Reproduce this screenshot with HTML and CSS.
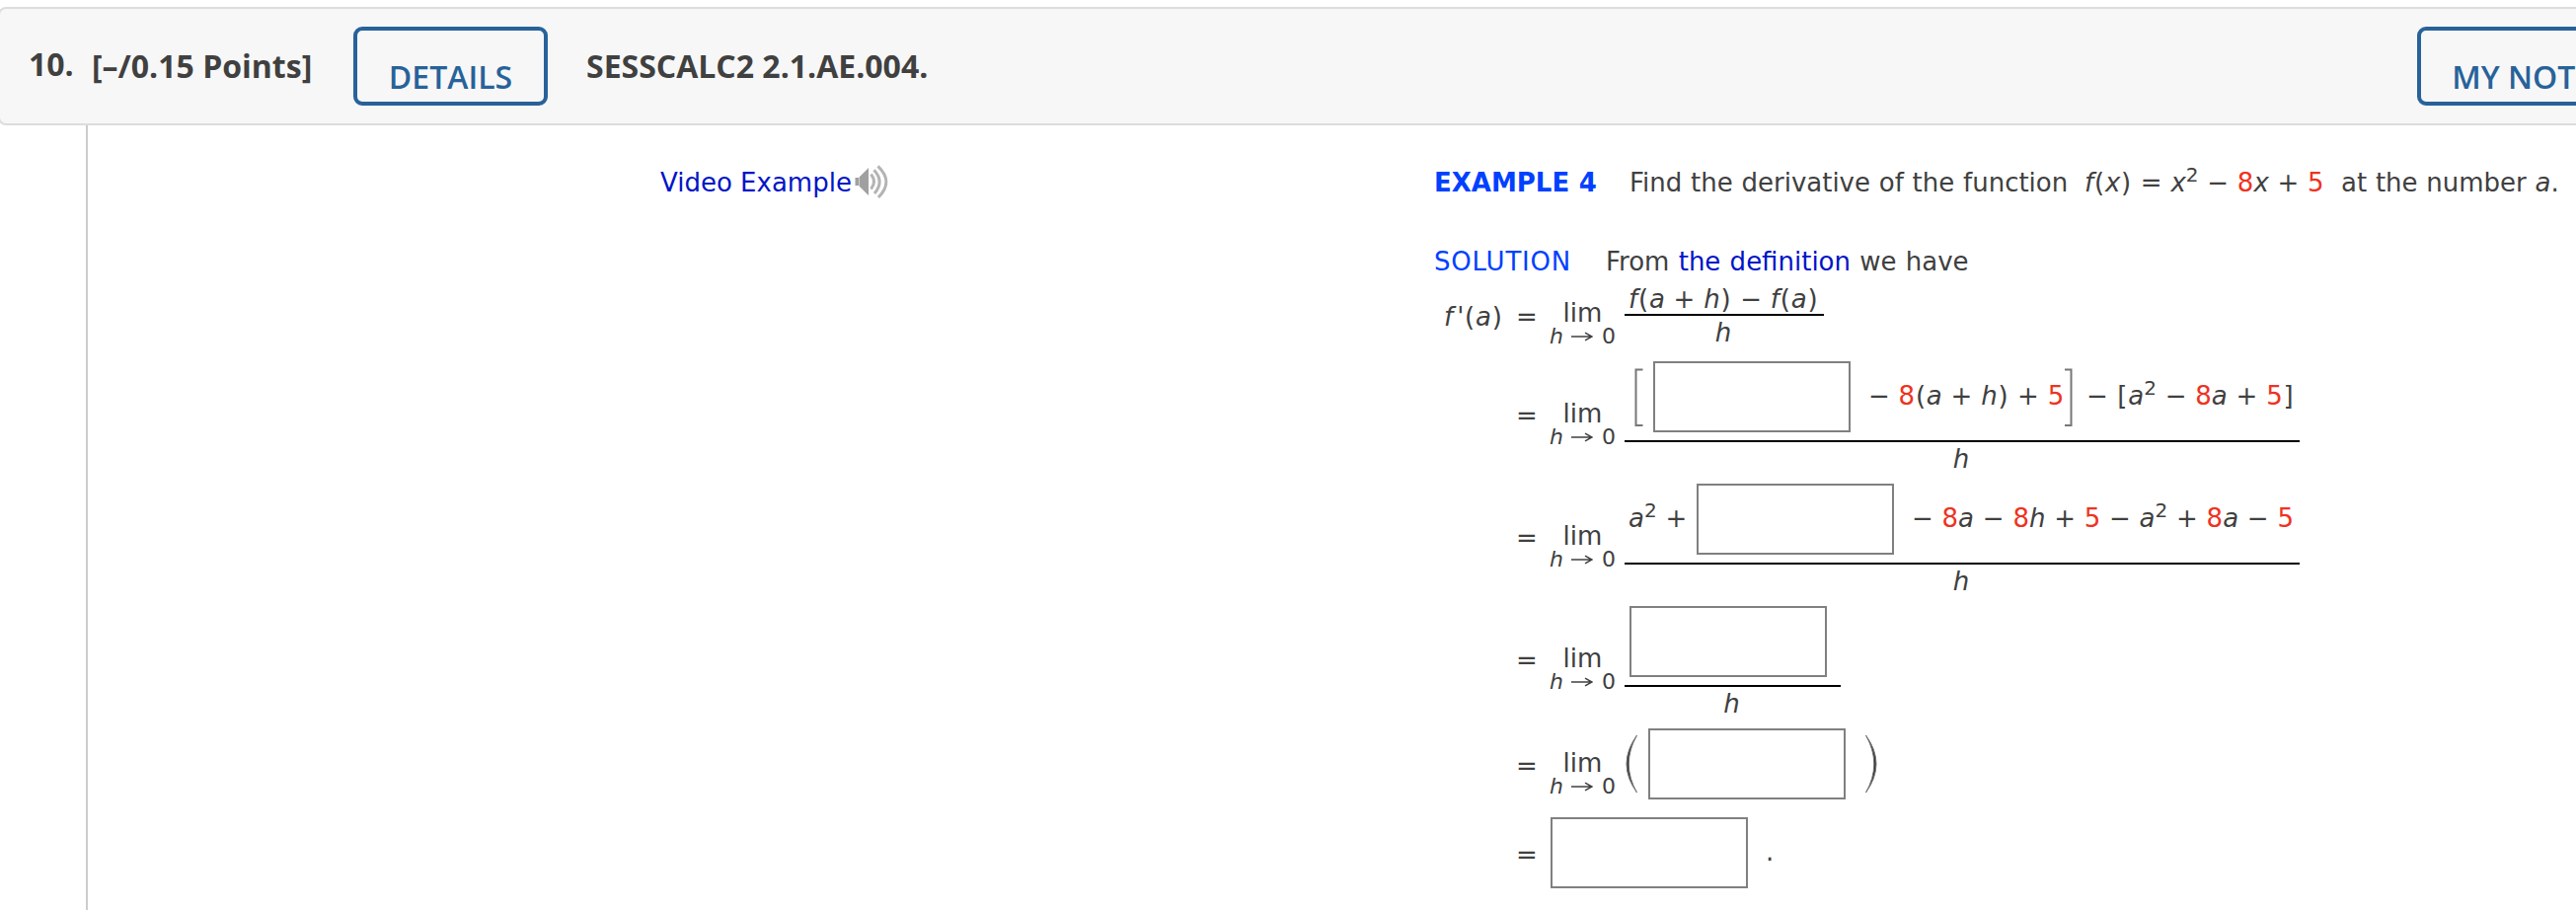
FILE: index.html
```html
<!DOCTYPE html>
<html lang="en">
<head>
<meta charset="utf-8">
<title>SESSCALC2 2.1.AE.004</title>
<link rel="stylesheet" href="styles.css">
</head>
<body>
<svg class="defs" width="0" height="0" aria-hidden="true">
  <symbol id="arrow" viewBox="0 0 22 10"><path d="M0 5H21M14 1.2L21 5L14 8.8" fill="none" stroke="currentColor" stroke-width="1.5"/></symbol>
</svg>
<header class="question-header">
  <span class="number">10.</span>
  <span class="points">[–/0.15 Points]</span>
  <button class="btn details">DETAILS</button>
  <span class="source">SESSCALC2 2.1.AE.004.</span>
  <button class="btn notes">MY NOTES</button>
</header>
<main class="question">
  <section class="video">
    <a class="link">Video Example</a>
    <svg class="speaker" width="36" height="36" viewBox="0 0 36 36">
      <path d="M1.500 14H5V22H1.500ZM5.500 13.500L15 4V32L5.500 22.500Z" fill="#a0a0a0"/>
      <g fill="none" stroke="#b4b4b4" stroke-width="3">
        <path d="M17.500 10.500Q23.500 18 17.500 25.500"/>
        <path d="M20.500 6.300Q31.500 18 21 30"/>
        <path d="M24.500 2.300Q41 18 25 34"/>
      </g>
    </svg>
  </section>
  <section class="example">
    <p class="line">
      <b class="label-example">EXAMPLE 4</b>
      <span class="find">Find the derivative of the function</span>
      <span class="func"><i>f</i><span class="p">(</span><i>x</i><span class="p">)</span> = <i>x</i><sup>2</sup> − <em>8</em><i>x</i> + <em>5</em></span>
      <span class="at">at the number <i>a</i>.</span>
    </p>
    <p class="line second">
      <span class="label-solution">SOLUTION</span>
      <span class="from">From <a class="link">the definition</a> we have</span>
    </p>
    <div class="eq eq-first">
      <span class="lhs"><i>f<span class="prime">'</span></i><span class="p">(</span><i>a</i><span class="p">)</span></span><span class="equals">=</span>
      <span class="limit"><span>lim</span><small><i>h</i><svg class="arrow"><use href="#arrow"/></svg>0</small></span>
      <div class="fraction narrow">
        <div class="num"><i>f</i><span class="p">(</span><i>a</i> + <i>h</i><span class="p">)</span> − <i>f</i><span class="p">(</span><i>a</i><span class="p">)</span></div>
        <div class="den"><i>h</i></div>
      </div>
    </div>
    <div class="eq">
      <span class="lhs"></span><span class="equals">=</span>
      <span class="limit"><span>lim</span><small><i>h</i><svg class="arrow"><use href="#arrow"/></svg>0</small></span>
      <div class="fraction wide">
        <div class="num">
          <svg class="bracket open" width="9" height="60" viewBox="0 0 9 60"><path d="M8.500 1.500H1.500V58H8.500" fill="none" stroke="#777" stroke-width="2"/></svg>
          <input class="blank" type="text">
          <span class="term t1">− <em>8</em><span class="p">(</span><i>a</i> + <i>h</i><span class="p">)</span> + <em>5</em></span>
          <svg class="bracket close" width="9" height="60" viewBox="0 0 9 60"><path d="M0 1.500H6.500V58H0" fill="none" stroke="#777" stroke-width="2"/></svg>
          <span class="term t2">− <span class="p">[</span><i>a</i><sup>2</sup> − <em>8</em><i>a</i> + <em>5</em><span class="p">]</span></span>
        </div>
        <div class="den"><i>h</i></div>
      </div>
    </div>
    <div class="eq">
      <span class="lhs"></span><span class="equals">=</span>
      <span class="limit"><span>lim</span><small><i>h</i><svg class="arrow"><use href="#arrow"/></svg>0</small></span>
      <div class="fraction wide">
        <div class="num">
          <span class="term t3"><i>a</i><sup>2</sup> +</span>
          <input class="blank" type="text">
          <span class="term t4">− <em>8</em><i>a</i> − <em>8</em><i>h</i> + <em>5</em> − <i>a</i><sup>2</sup> + <em>8</em><i>a</i> − <em>5</em></span>
        </div>
        <div class="den"><i>h</i></div>
      </div>
    </div>
    <div class="eq">
      <span class="lhs"></span><span class="equals">=</span>
      <span class="limit"><span>lim</span><small><i>h</i><svg class="arrow"><use href="#arrow"/></svg>0</small></span>
      <div class="fraction medium">
        <div class="num"><input class="blank first" type="text"></div>
        <div class="den"><i>h</i></div>
      </div>
    </div>
    <div class="eq eq-paren">
      <span class="lhs"></span><span class="equals">=</span>
      <span class="limit"><span>lim</span><small><i>h</i><svg class="arrow"><use href="#arrow"/></svg>0</small></span>
      <svg class="paren" width="14" height="60" viewBox="0 0 14 60"><path d="M12.500 1Q-8.500 30 12.500 59Q-4 30 12.500 1Z" fill="#333" stroke="#777" stroke-width="1"/></svg>
      <input class="blank" type="text">
      <svg class="paren right" width="14" height="60" viewBox="0 0 14 60"><path d="M1.500 1Q22.500 30 1.500 59Q18 30 1.500 1Z" fill="#333" stroke="#777" stroke-width="1"/></svg>
    </div>
    <div class="eq eq-last">
      <span class="lhs"></span><span class="equals">=</span>
      <input class="blank" type="text"><span class="period">.</span>
    </div>
  </section>
</main>
</body>
</html>
```

FILE: styles.css
```css
* { box-sizing: border-box; }
body {
  margin: 0;
  height: 922px;
  padding-top: 7px;
  overflow: hidden;
  background: #fff;
  color: #404040;
  font: 26px/30px Verdana, "DejaVu Sans", sans-serif;
}
.defs { position: absolute; }

.question-header {
  display: flex;
  align-items: flex-start;
  width: 2760px;
  height: 120px;
  margin-left: -2px;
  border: 2px solid #ddd;
  border-radius: 8px;
  background: #f7f7f7;
  font: 700 32px/44px "Open Sans", sans-serif;
  white-space: nowrap;
}
.number { width: 64px; margin: 34px 0 0 29px; }
.points { width: 265px; margin-top: 36px; }
.btn {
  flex: none;
  height: 80px;
  margin: 18px 0 0;
  padding: 22px 0 0;
  border: 4px solid #28629a;
  border-radius: 9px;
  background: transparent;
  color: #28629a;
  font: 600 32px/44px "Open Sans", sans-serif;
}
.details { width: 197px; }
.source { width: 1855px; margin: 36px 0 0 39px; }
.notes { width: 231px; }

.question {
  display: flex;
  height: 795px;
  margin-left: 87px;
  border-left: 2px solid #ccc;
}
.video {
  display: flex;
  width: 1364px;
  padding: 43px 0 0 580px;
  flex: none;
}
.link { color: #0014c8; }
.speaker { margin: -4px 0 0 2px; }
.example { flex: none; padding-top: 43px; white-space: nowrap; word-spacing: 0.5px; }

.line { display: flex; height: 30px; margin: 0; }
.second { margin-top: 50px; }
.label-example { width: 198px; color: #0040ff; }
.label-solution { width: 174px; color: #0040ff; letter-spacing: 0.8px; }
.find { width: 461px; }
.func { width: 260px; }
.from { word-spacing: 1px; }
em { color: #ee3322; font-style: normal; }
sup { font-size: 20px; line-height: 0; vertical-align: 10px; }
.p { padding: 0 0.8px; }
.prime { margin-left: 4px; }

.eq { display: flex; align-items: flex-start; height: 124px; }
.eq-first { height: 78px; margin-top: 8px; }
.eq-paren { height: 90px; }
.lhs { width: 83px; padding-left: 10px; }
.equals { width: 33px; margin-top: 40px; }
.lhs, .eq-first .equals { margin-top: 18px; }
.eq-paren .equals { margin-top: 23px; }
.eq-last .equals { width: 35px; margin-top: 23px; }
.limit {
  display: flex;
  flex-direction: column;
  align-items: center;
  width: 69px;
  margin-top: 38px;
}
.eq-first .limit { margin-top: 14px; }
.eq-paren .limit { margin-top: 20px; }
.limit small {
  display: flex;
  align-items: center;
  margin-top: -4px;
  font-size: 22px;
  line-height: 26px;
}
.arrow { width: 22px; height: 10px; margin: 0 9px 0 8px; }

.fraction { margin-left: 8px; }
.narrow { width: 202px; }
.wide { width: 684px; }
.medium { width: 219px; }
.num { display: flex; height: 82px; border-bottom: 2px solid #000; }
.narrow .num { display: block; height: 32px; padding-left: 4px; }
.den { margin-top: 2px; padding-right: 2px; text-align: center; }
.blank {
  flex: none;
  width: 200px;
  height: 72px;
  margin: 0;
  padding: 0 8px;
  border: 2px solid #808080;
  background: #fff;
  font: inherit;
}
.blank.first { margin-left: 5px; }
.bracket { flex: none; margin-top: 7px; }
.open { margin-left: 10px; margin-right: 10px; }
.term { margin-top: 20px; }
.t1 { width: 199px; margin-left: 18px; }
.t2 { margin-left: 13px; }
.t3 { width: 69px; margin-left: 4px; }
.t4 { margin-left: 18px; }
.paren { margin: 6px 10px 0 8px; }
.paren.right { margin-left: 19px; }
.period { margin: 20px 0 0 18px; }
```
